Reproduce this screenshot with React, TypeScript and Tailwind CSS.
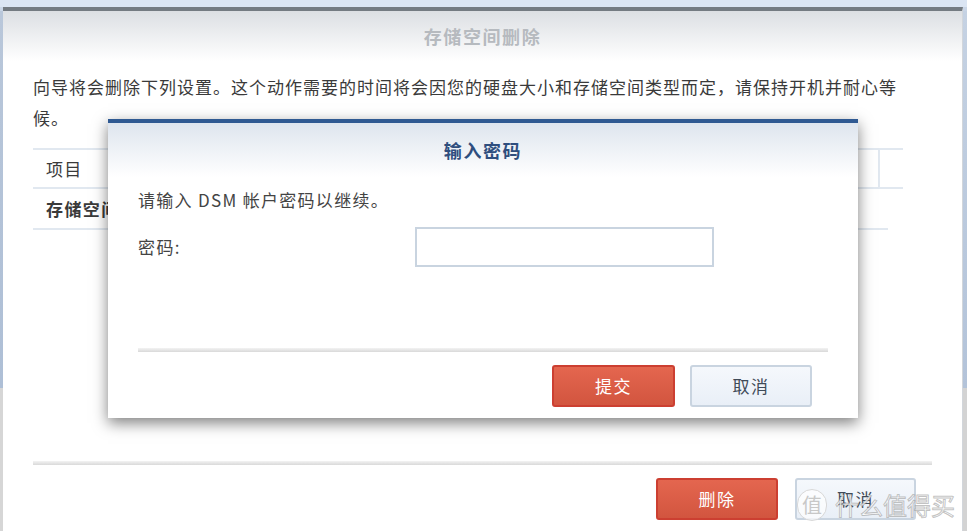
import React from "react";

const font = "font-['Noto_Sans_CJK_SC','Noto_Sans',sans-serif]";

export default function App() {
  return (
    <div
      className={`relative w-[967px] h-[531px] overflow-hidden bg-[#dbe5f3] ${font} text-[#3a3a3a]`}
    >
      <div className="flex h-full pt-[7px]">
        {/* left background strip */}
        <div className="w-[3px] flex flex-col">
          <div className="h-[4px] bg-[#c9d5e6]" />
          <div className="flex-1 bg-gradient-to-b from-[#b9c7da] to-[#aebfd6]" />
          <div className="h-[143px] bg-[#d6d6d6]" />
        </div>

        {/* outer dialog */}
        <div className="w-[960px] flex flex-col bg-white border-t-4 border-[#747b82] border-r border-r-[#d2d6db]">
          <div className="h-[50px] flex items-center justify-center bg-gradient-to-b from-[#dcdfe3] to-white">
            <span className="text-[18px] font-bold tracking-[1.6px] text-[#b6babf]">存储空间删除</span>
          </div>

          <div className="flex-1 flex flex-col px-[30px]">
            <p className="mt-[10px] w-[900px] whitespace-nowrap text-[17px] leading-[31px] tracking-[1px]">
              向导将会删除下列设置。这个动作需要的时间将会因您的硬盘大小和存储空间类型而定，请保持开机并耐心等
              <br />
              候。
            </p>

            <div className="mt-[15px] w-[870px] flex flex-col">
              <div className="h-[41px] flex border-y-2 border-[#e1e8f0]">
                <div className="flex-1 flex items-center pl-[13px] text-[17px] tracking-[1.2px]">项目</div>
                <div className="w-[25px] border-l-2 border-[#e1e8f0]" />
              </div>
              <div className="h-[41px] w-[855px] flex items-center pl-[13px] border-b-2 border-[#e1e8f0] text-[17px] font-bold tracking-[1.4px]">
                存储空间 1
              </div>
            </div>

            <div className="flex-1" />

            <div className="h-[4px] bg-gradient-to-b from-[#f3f3f3] to-[#d9d9d9]" />
            <div className="mt-[13px] mb-[11px] flex justify-end gap-[17px] pr-[16px]">
              <button className="w-[122px] h-[42px] rounded-[3px] border-2 border-[#cc3f31] bg-gradient-to-b from-[#e4664f] to-[#d2553f] text-white text-[17px] tracking-[1.4px]">
                删除
              </button>
              <button className="w-[121px] h-[42px] rounded-[3px] border-2 border-[#c9d4e0] bg-gradient-to-b from-[#f5f8fc] to-[#e9eff7] text-[#3f4a57] text-[17px] tracking-[1.4px]">
                取消
              </button>
            </div>
          </div>
        </div>

        {/* right background strip */}
        <div className="flex-1 flex flex-col">
          <div className="h-[4px] bg-[#c9d5e6]" />
          <div className="flex-1 bg-gradient-to-b from-[#c5d2e3] to-[#b3c3d9]" />
          <div className="h-[143px] bg-[#d3d3d3]" />
        </div>
      </div>

      {/* modal: 输入密码 */}
      <div className="absolute left-[108px] top-[119px] w-[750px] h-[299px] flex flex-col bg-white border-t-4 border-[#2f5992] shadow-[0_5px_14px_rgba(0,0,0,0.5)]">
        <div className="h-[54px] flex items-center justify-center bg-gradient-to-b from-[#dee5ee] to-white">
          <span className="text-[18px] font-bold tracking-[1.6px] text-[#2f4e7e]">输入密码</span>
        </div>
        <div className="flex-1 flex flex-col px-[30px]">
          <p className="mt-[11px] text-[17px] leading-[24px] tracking-[1.3px] text-[#444]">请输入 DSM 帐户密码以继续。</p>
          <div className="mt-[15px] flex items-center">
            <span className="w-[277px] text-[17px] tracking-[1.4px] text-[#444]">密码:</span>
            <input
              type="password"
              className="w-[299px] h-[40px] border-2 border-[#c9d4e0] bg-white outline-none"
            />
          </div>
          <div className="flex-1" />
          <div className="h-[4px] bg-gradient-to-b from-[#f3f3f3] to-[#d9d9d9]" />
          <div className="mt-[13px] mb-[11px] flex justify-end gap-[15px] pr-[16px]">
            <button className="w-[123px] h-[42px] rounded-[3px] border-2 border-[#cc3f31] bg-gradient-to-b from-[#e4664f] to-[#d2553f] text-white text-[17px] tracking-[1.4px]">
              提交
            </button>
            <button className="w-[122px] h-[42px] rounded-[3px] border-2 border-[#c9d4e0] bg-gradient-to-b from-[#f5f8fc] to-[#e9eff7] text-[#3f4a57] text-[17px] tracking-[1.4px]">
              取消
            </button>
          </div>
        </div>
      </div>

      {/* watermark */}
      <div className="absolute left-[797px] top-[489px] flex items-center gap-[8px] pointer-events-none">
        <div className="w-[30px] h-[32px] rounded-full bg-white/70 border border-[#d8d8d8] flex items-center justify-center text-[20px] text-[#c8c8c8]">
          值
        </div>
        <span className="text-[24px] leading-[28px] text-white/80 [-webkit-text-stroke:1px_rgba(120,120,120,0.45)]">
          什么值得买
        </span>
      </div>
    </div>
  );
}
